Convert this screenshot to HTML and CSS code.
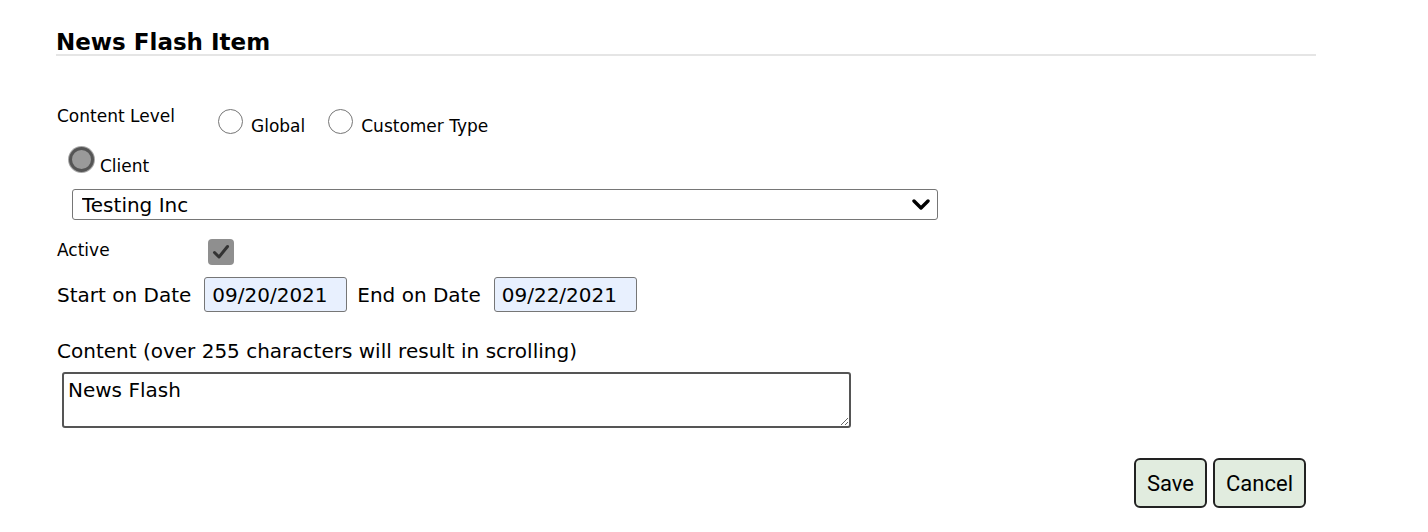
FILE: index.html
```html
<!DOCTYPE html>
<html lang="en">

<head>
    <meta charset="UTF-8">
    <meta name="viewport" content="width=device-width, initial-scale=1.0">
    <title>News Flash Item</title>
    <link rel="stylesheet" href="styles.css">
</head>

<body>
    <div id="newsflash-container">
        <h2 class="section-title">News Flash Item</h2>

        <form id="newsflash-form">
            <div class="level-row">
                <span class="level-label">Content Level</span>
                <label class="radio-option">
                    <input type="radio" name="level" value="global">
                    <span>Global</span>
                </label>
                <label class="radio-option">
                    <input type="radio" name="level" value="customer">
                    <span>Customer Type</span>
                </label>
            </div>

            <div class="client-row">
                <label class="radio-option">
                    <input type="radio" name="level" value="client" checked disabled>
                    <span>Client</span>
                </label>
            </div>

            <div class="select-wrap">
                <select id="client-select">
                    <option>Testing Inc</option>
                </select>
                <svg class="select-arrow" width="18" height="12" viewBox="0 0 18 12">
                    <path d="M2 2 L9 9 L16 2" fill="none" stroke="#000" stroke-width="3.4" stroke-linecap="round" stroke-linejoin="round" />
                </svg>
            </div>

            <div class="active-row">
                <span class="active-label">Active</span>
                <span class="fake-check">
                    <svg width="18" height="16" viewBox="0 0 18 16">
                        <path d="M2.5 8.5 L7 13 L15.5 2.5" fill="none" stroke="#333" stroke-width="3" stroke-linecap="round" stroke-linejoin="round" />
                    </svg>
                </span>
            </div>

            <div class="date-row">
                <label for="start-date">Start on Date</label>
                <input type="text" id="start-date" class="date-input" value="09/20/2021">
                <label for="end-date">End on Date</label>
                <input type="text" id="end-date" class="date-input" value="09/22/2021">
            </div>

            <div class="content-label">Content (over 255 characters will result in scrolling)</div>
            <textarea id="content">News Flash</textarea>

            <div class="button-row">
                <button type="button">Save</button>
                <button type="button">Cancel</button>
            </div>
        </form>
    </div>
</body>

</html>
```

FILE: styles.css
```css
body {
    margin: 0;
    font-family: 'DejaVu Sans', Verdana, sans-serif;
    color: #000;
    background-color: #fff;
}

#newsflash-container {
    width: 1260px;
    margin-left: 56px;
    padding-top: 30px;
}

.section-title {
    margin: 0;
    font-size: 23px;
    font-weight: bold;
    line-height: 24px;
    border-bottom: 2px solid #e5e5e5;
}

#newsflash-form {
    font-size: 17px;
}

.level-row {
    display: flex;
    align-items: flex-start;
    margin-top: 53px;
    height: 33px;
}

.level-label {
    width: 161px;
    padding-left: 1px;
    line-height: 20px;
    margin-top: -3px;
}

.radio-option {
    display: flex;
    align-items: flex-end;
    margin-right: 23px;
}

.radio-option span {
    margin-left: 8px;
    line-height: 20px;
    margin-bottom: -2px;
}

.radio-option input {
    appearance: none;
    -webkit-appearance: none;
    width: 25px;
    height: 25px;
    margin: 0;
    border: 1px solid #767676;
    border-radius: 50%;
    background-color: #fff;
}

.radio-option input:checked {
    border: 3px solid #555;
    background-color: #9a9a9a;
    box-shadow: 0 0 0 1px #a8a8a8;
}

.client-row {
    display: flex;
    align-items: flex-start;
    padding-left: 13px;
    margin-top: 5px;
    height: 34px;
}

.client-row .radio-option span {
    margin-left: 6px;
    margin-bottom: -4px;
}

.select-wrap {
    position: relative;
    width: 866px;
    margin-left: 16px;
    margin-top: 8px;
}

#client-select {
    appearance: none;
    -webkit-appearance: none;
    width: 100%;
    height: 31px;
    padding: 0 9px;
    font-family: 'DejaVu Sans', Verdana, sans-serif;
    font-size: 20px;
    color: #000;
    background-color: #fff;
    border: 1px solid #767676;
    border-radius: 3px;
}

.select-arrow {
    position: absolute;
    right: 8px;
    top: 10px;
}

.active-row {
    display: flex;
    align-items: flex-start;
    margin-top: 19px;
    height: 38px;
}

.active-label {
    width: 151px;
    padding-left: 1px;
    line-height: 20px;
    margin-top: 1px;
}

.fake-check {
    display: flex;
    align-items: center;
    justify-content: center;
    width: 26px;
    height: 26px;
    border-radius: 4px;
    background-color: #8f8f8f;
}

.date-row {
    display: flex;
    align-items: center;
    font-size: 20px;
    height: 35px;
}

.date-row label {
    padding-left: 1px;
    margin-right: 13px;
}

.date-row label + .date-input + label {
    margin-left: 9px;
}

.date-input {
    width: 143px;
    height: 35px;
    box-sizing: border-box;
    padding: 0 7px;
    font-family: 'DejaVu Sans', Verdana, sans-serif;
    font-size: 20px;
    color: #000;
    background-color: #e8f0fe;
    border: 1px solid #767676;
    border-radius: 3px;
}

.content-label {
    font-size: 20px;
    padding-left: 1px;
    margin-top: 27px;
    line-height: 24px;
}

#content {
    display: block;
    width: 789px;
    height: 56px;
    box-sizing: border-box;
    margin-left: 6px;
    margin-top: 9px;
    padding: 4px 4px;
    font-family: 'DejaVu Sans', Verdana, sans-serif;
    font-size: 20px;
    border: 2px solid #555;
    border-radius: 3px;
    resize: both;
}

.button-row {
    display: flex;
    justify-content: flex-end;
    gap: 6px;
    margin-top: 30px;
    padding-right: 10px;
}

button {
    height: 50px;
    padding: 0 11px;
    font-family: Roboto, 'Liberation Sans', sans-serif;
    font-size: 22px;
    color: #000;
    background-color: #e1ecdf;
    border: 2px solid #222;
    border-radius: 6px;
    cursor: pointer;
}
```
